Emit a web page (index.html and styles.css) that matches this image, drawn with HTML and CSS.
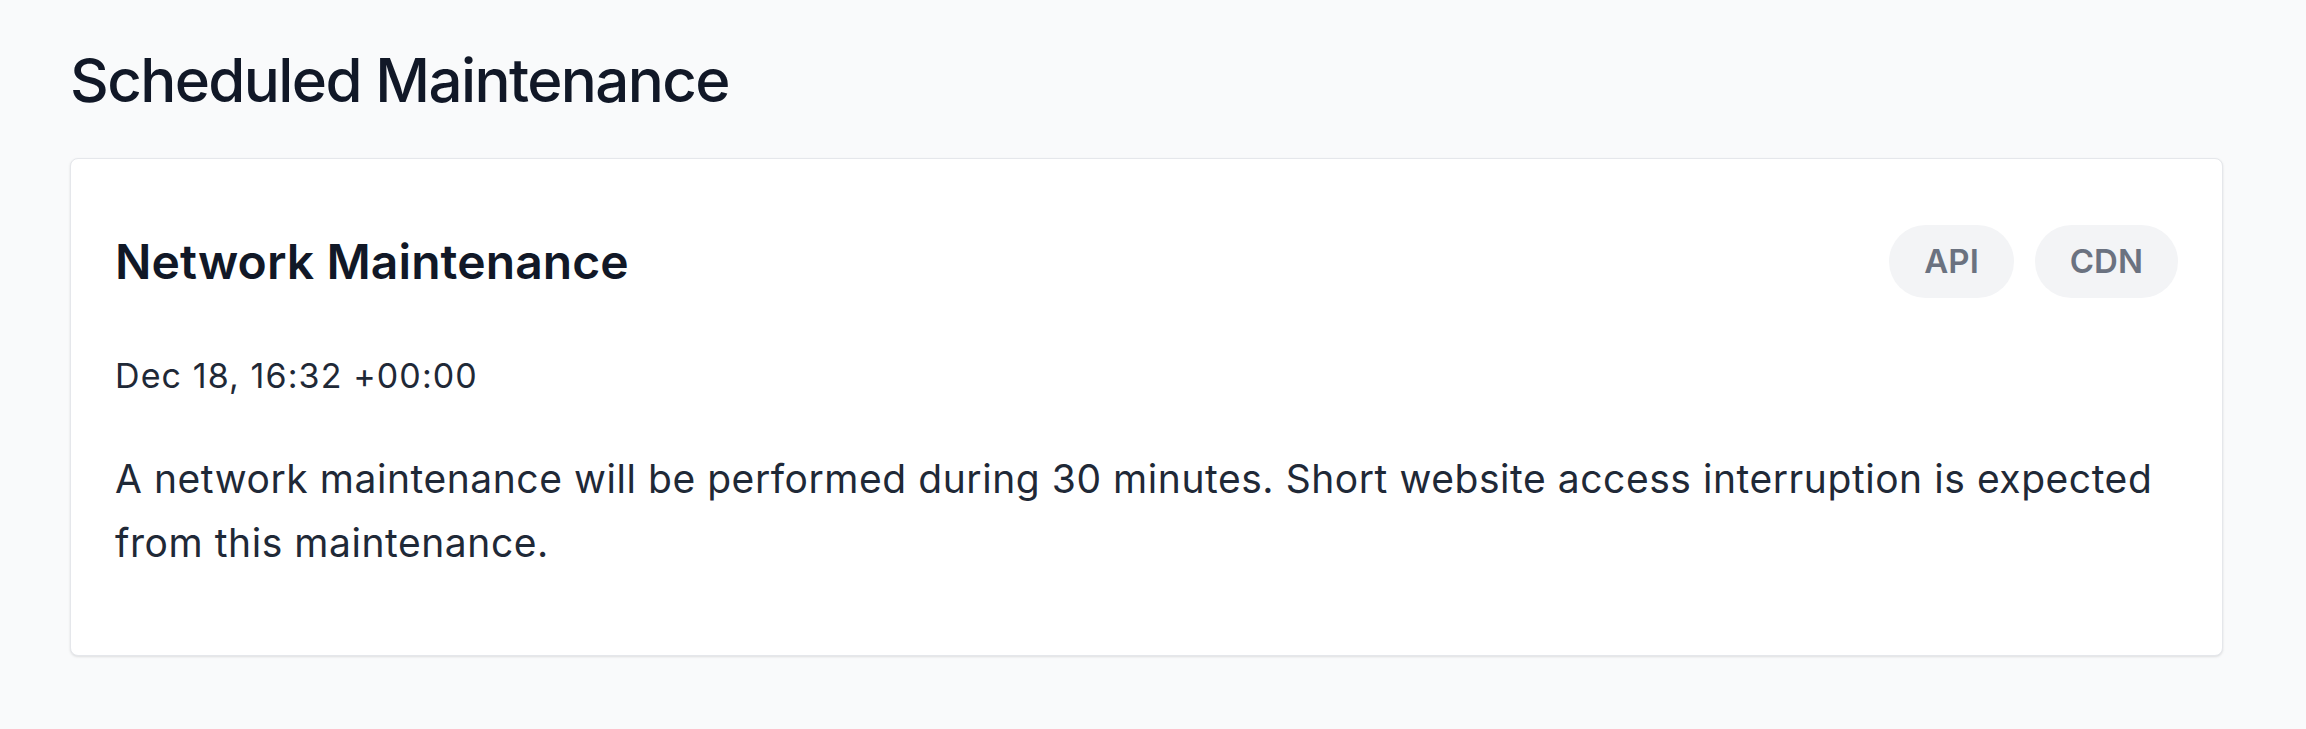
FILE: index.html
```html
<!DOCTYPE html>
<html lang="en">
<head>
<meta charset="utf-8">
<title>Scheduled Maintenance</title>
<link rel="stylesheet" href="styles.css">
</head>
<body>
<main class="page">
  <h1 class="page-title">Scheduled Maintenance</h1>
  <section class="card">
    <div class="card-head">
      <h2 class="card-title">Network Maintenance</h2>
      <div class="tags">
        <span class="tag">API</span>
        <span class="tag">CDN</span>
      </div>
    </div>
    <p class="card-date">Dec 18, 16:32 +00:00</p>
    <p class="card-text">A network maintenance will be performed during 30 minutes. Short website access interruption is expected from this maintenance.</p>
  </section>
</main>
</body>
</html>
```
FILE: styles.css
```css
* { box-sizing: border-box; }
html, body { margin: 0; padding: 0; }
body {
  background: #f9fafb;
  font-family: "Inter", "Liberation Sans", sans-serif;
  color: #111827;
}
.page {
  padding: 44px 83px 60px 70px;
}
.page-title {
  margin: 0;
  font-size: 60px;
  line-height: 72px;
  font-weight: 500;
  color: #111827;
  letter-spacing: -1.6px;
}
.card {
  margin-top: 42px;
  background: #fff;
  border: 1px solid #e5e7eb;
  border-radius: 8px;
  box-shadow: 0 1px 3px rgba(0,0,0,0.08), 0 1px 2px rgba(0,0,0,0.04);
  padding: 66px 44px 80px 44px;
}
.card-head {
  display: flex;
  justify-content: space-between;
  align-items: center;
}
.card-title {
  margin: 0;
  font-size: 48px;
  line-height: 56px;
  font-weight: 600;
  color: #111827;
  letter-spacing: 0.1px;
}
.tags {
  display: flex;
  gap: 21px;
}
.tag {
  display: inline-block;
  height: 73px;
  line-height: 73px;
  padding: 0 35px;
  border-radius: 999px;
  background: #f3f4f6;
  color: #6b7280;
  font-size: 33px;
  font-weight: 600;
}
.card-date {
  margin: 54px 0 0;
  font-size: 34px;
  line-height: 48px;
  letter-spacing: 1.1px;
  color: #1f2937;
}
.card-text {
  margin: 47px 0 0;
  font-size: 39px;
  line-height: 64px;
  letter-spacing: 0.55px;
  color: #1f2937;
}
```
